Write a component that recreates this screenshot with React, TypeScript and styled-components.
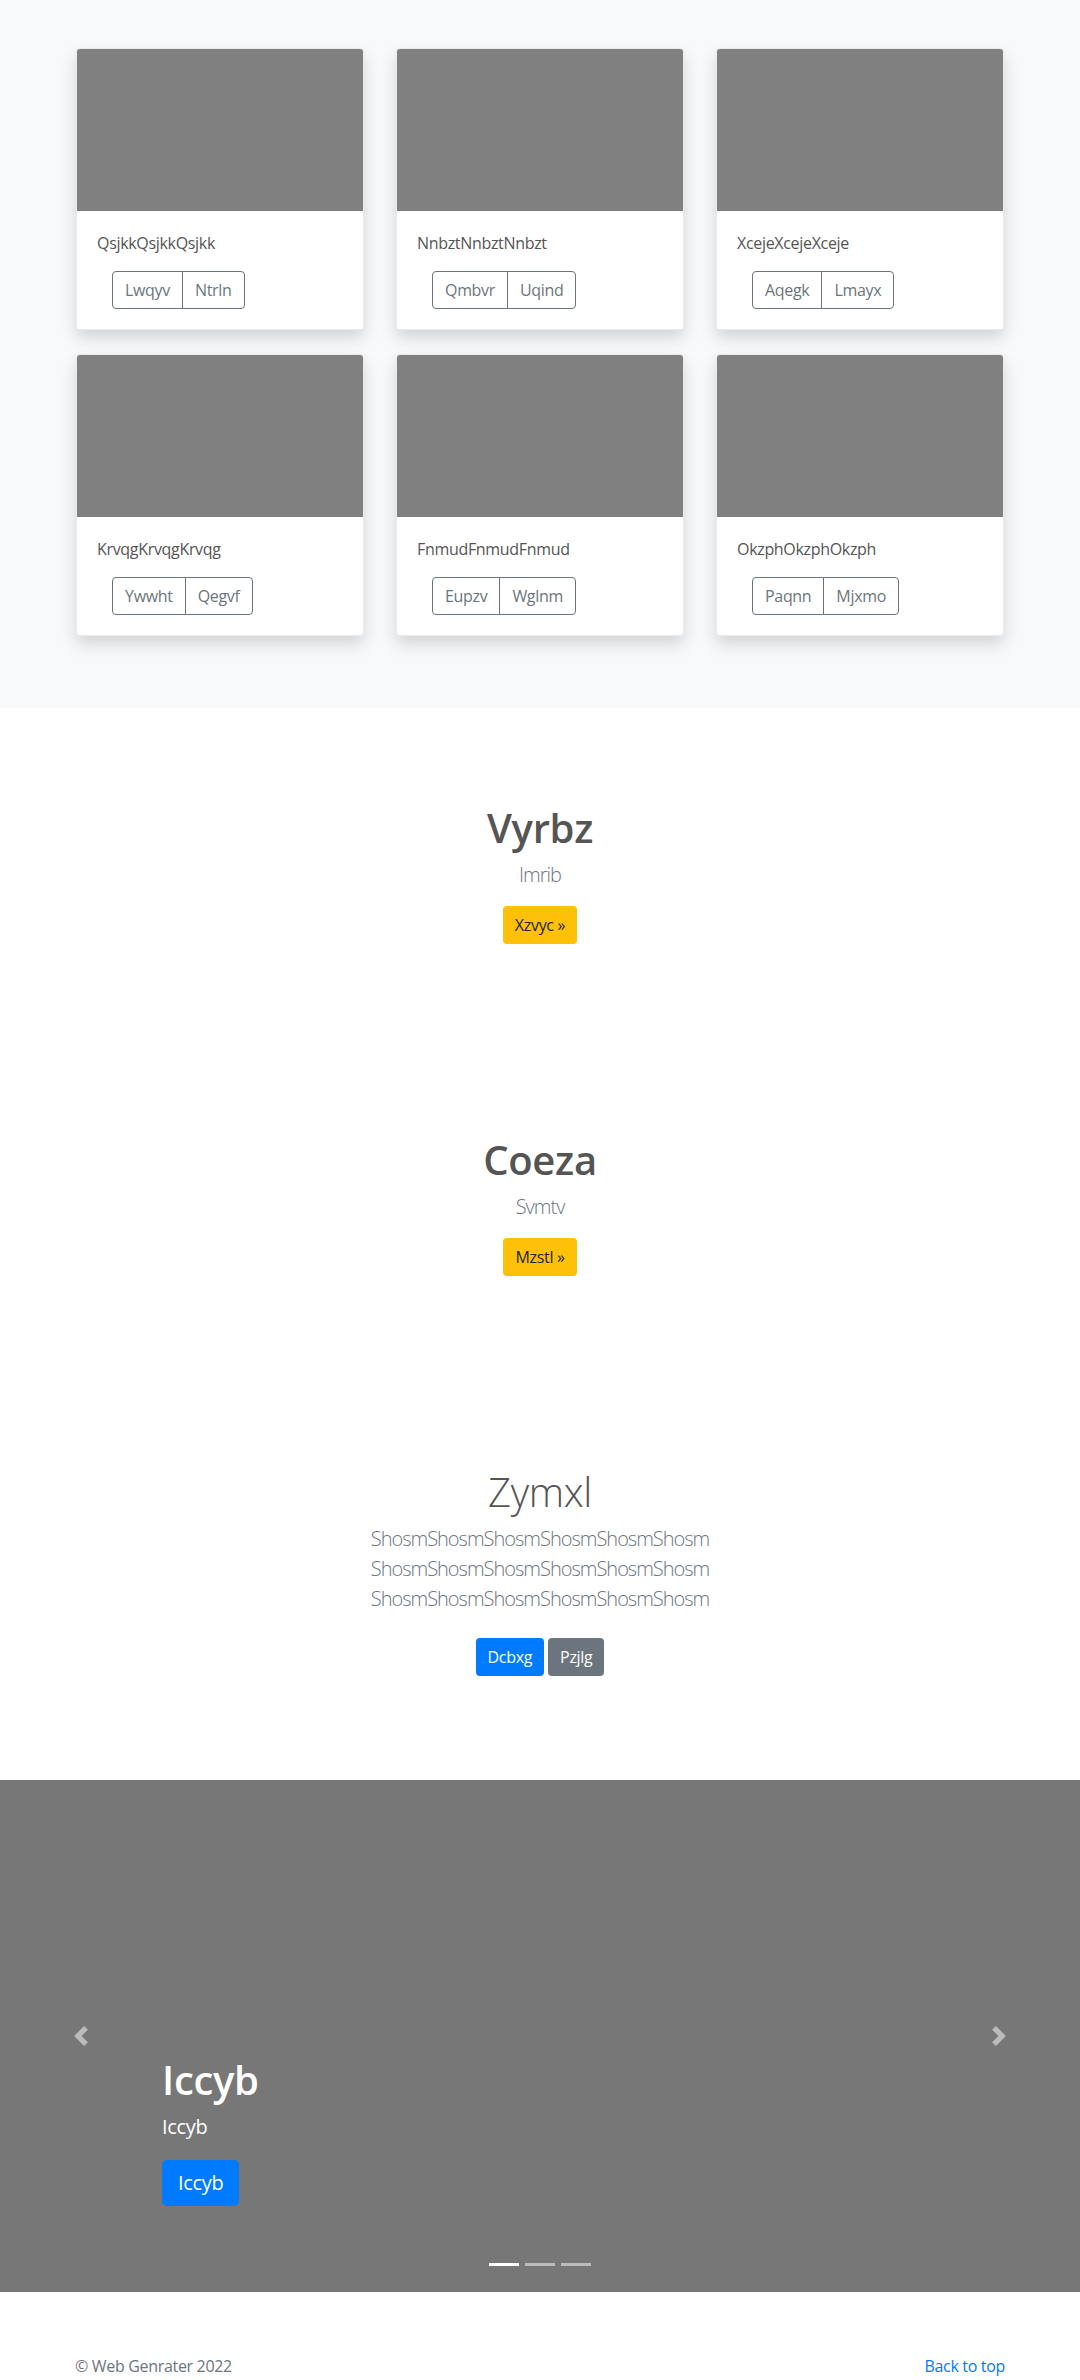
import React from "react";
import styled, { createGlobalStyle } from "styled-components";

const GlobalStyle = createGlobalStyle`
  * { box-sizing: border-box; }
  body {
    margin: 0;
    font-family: "Open Sans", "Noto Sans", sans-serif;
    font-size: 16px;
    line-height: 1.5;
    letter-spacing: -0.02em;
    color: #555;
    background: #fff;
  }
`;

const AlbumSection = styled.section`
  background: #f8f9fa;
  padding: 48px 0 72px;
`;

const CardGrid = styled.div`
  max-width: 960px;
  margin: 0 auto;
  padding: 0 16px;
  display: grid;
  grid-template-columns: repeat(3, 1fr);
  column-gap: 32px;
  row-gap: 24px;
`;

const Card = styled.div`
  background: #fff;
  border: 1px solid rgba(0, 0, 0, 0.08);
  border-radius: 4px;
  overflow: hidden;
  box-shadow: 0 0.5rem 1rem rgba(0, 0, 0, 0.15);
`;

const Thumb = styled.div`
  height: 162px;
  background: #808080;
`;

const CardBody = styled.div`
  padding: 20px;
`;

const CardText = styled.p`
  margin: 0 0 16px;
  font-size: 16px;
  line-height: 24px;
  color: #555;
`;

const BtnGroup = styled.div`
  display: inline-flex;
  margin-left: 15px;
`;

const OutlineBtn = styled.button`
  font-family: inherit;
  font-size: 16px;
  line-height: 24px;
  letter-spacing: inherit;
  padding: 6px 12px;
  background: transparent;
  color: #6c757d;
  border: 1px solid #6c757d;
  &:first-child {
    border-radius: 4px 0 0 4px;
  }
  &:last-child {
    border-radius: 0 4px 4px 0;
    margin-left: -1px;
  }
`;

const Hero = styled.section`
  padding: 96px 0;
  text-align: center;
`;

const HeroTitle = styled.h1<{ $light?: boolean }>`
  margin: 0 0 8px;
  font-size: 40px;
  line-height: 48px;
  font-weight: ${(p) => (p.$light ? 300 : 600)};
  color: #555;
`;

const Lead = styled.p`
  margin: 0 0 16px;
  font-size: 20px;
  line-height: 30px;
  font-weight: 300;
  letter-spacing: -0.05em;
  color: #6c757d;
`;

const Actions = styled.p<{ $spaced?: boolean }>`
  margin: 0;
  display: flex;
  justify-content: center;
  gap: 4px;
  padding: ${(p) => (p.$spaced ? "8px 0" : "0")};
`;

const SolidBtn = styled.a<{ $bg: string; $fg: string }>`
  display: inline-block;
  font-size: 16px;
  line-height: 24px;
  padding: 7px 12px;
  border-radius: 4px;
  background: ${(p) => p.$bg};
  color: ${(p) => p.$fg};
  text-decoration: none;
`;

const Carousel = styled.section`
  position: relative;
  height: 512px;
  background: #777;
  display: flex;
  align-items: flex-end;
  padding: 0 162px 86px 162px;
`;

const Caption = styled.div`
  color: #fff;
  text-align: left;
`;

const CaptionTitle = styled.h1`
  margin: 0 0 8px;
  font-size: 40px;
  line-height: 48px;
  font-weight: 600;
`;

const CaptionText = styled.p`
  margin: 0 0 18px;
  font-size: 20px;
  line-height: 30px;
`;

const LargeBtn = styled.a`
  display: inline-block;
  font-size: 20px;
  line-height: 30px;
  padding: 8px 16px;
  border-radius: 5px;
  background: #007bff;
  color: #fff;
  text-decoration: none;
`;

const Control = styled.span<{ $side: "left" | "right" }>`
  position: absolute;
  top: 0;
  bottom: 0;
  ${(p) => p.$side}: 0;
  width: 15%;
  display: flex;
  align-items: center;
  justify-content: center;
  opacity: 0.5;
`;

const Indicators = styled.ol`
  position: absolute;
  left: 0;
  right: 0;
  bottom: 26px;
  margin: 0;
  padding: 0;
  list-style: none;
  display: flex;
  justify-content: center;
  gap: 6px;
`;

const Indicator = styled.li<{ $active?: boolean }>`
  width: 30px;
  height: 3px;
  background: #fff;
  opacity: ${(p) => (p.$active ? 1 : 0.5)};
`;

const Footer = styled.footer`
  max-width: 930px;
  margin: 0 auto;
  padding: 62px 0 48px;
  display: flex;
  justify-content: space-between;
  font-size: 16px;
  line-height: 24px;
  color: #6c757d;
`;

const FooterLink = styled.a`
  color: #007bff;
  text-decoration: none;
`;

const cards = [
  ["QsjkkQsjkkQsjkk", "Lwqyv", "Ntrln"],
  ["NnbztNnbztNnbzt", "Qmbvr", "Uqind"],
  ["XcejeXcejeXceje", "Aqegk", "Lmayx"],
  ["KrvqgKrvqgKrvqg", "Ywwht", "Qegvf"],
  ["FnmudFnmudFnmud", "Eupzv", "Wglnm"],
  ["OkzphOkzphOkzph", "Paqnn", "Mjxmo"],
];

const shosm = "ShosmShosmShosmShosmShosmShosm";

const Chevron = ({ dir }: { dir: "prev" | "next" }) => (
  <svg width="20" height="20" viewBox="0 0 8 8" fill="#fff">
    {dir === "prev" ? (
      <path d="M5.25 0l-4 4 4 4 1.5-1.5L4.25 4l2.5-2.5L5.25 0z" />
    ) : (
      <path d="M2.75 0l-1.5 1.5L3.75 4l-2.5 2.5L2.75 8l4-4-4-4z" />
    )}
  </svg>
);

export default function App() {
  return (
    <>
      <GlobalStyle />
      <AlbumSection>
        <CardGrid>
          {cards.map(([t, a, b]) => (
            <Card key={t}>
              <Thumb />
              <CardBody>
                <CardText>{t}</CardText>
                <BtnGroup>
                  <OutlineBtn>{a}</OutlineBtn>
                  <OutlineBtn>{b}</OutlineBtn>
                </BtnGroup>
              </CardBody>
            </Card>
          ))}
        </CardGrid>
      </AlbumSection>

      <Hero>
        <HeroTitle>Vyrbz</HeroTitle>
        <Lead>Imrib</Lead>
        <Actions>
          <SolidBtn $bg="#ffc107" $fg="#212529">Xzvyc »</SolidBtn>
        </Actions>
      </Hero>

      <Hero>
        <HeroTitle>Coeza</HeroTitle>
        <Lead>Svmtv</Lead>
        <Actions>
          <SolidBtn $bg="#ffc107" $fg="#212529">Mzstl »</SolidBtn>
        </Actions>
      </Hero>

      <Hero>
        <HeroTitle $light>Zymxl</HeroTitle>
        <Lead>
          {shosm}
          <br />
          {shosm}
          <br />
          {shosm}
        </Lead>
        <Actions $spaced>
          <SolidBtn $bg="#007bff" $fg="#fff">Dcbxg</SolidBtn>
          <SolidBtn $bg="#6c757d" $fg="#fff">Pzjlg</SolidBtn>
        </Actions>
      </Hero>

      <Carousel>
        <Control $side="left">
          <Chevron dir="prev" />
        </Control>
        <Caption>
          <CaptionTitle>Iccyb</CaptionTitle>
          <CaptionText>Iccyb</CaptionText>
          <LargeBtn>Iccyb</LargeBtn>
        </Caption>
        <Control $side="right">
          <Chevron dir="next" />
        </Control>
        <Indicators>
          <Indicator $active />
          <Indicator />
          <Indicator />
        </Indicators>
      </Carousel>

      <Footer>
        <span>© Web Genrater 2022</span>
        <FooterLink>Back to top</FooterLink>
      </Footer>
    </>
  );
}
